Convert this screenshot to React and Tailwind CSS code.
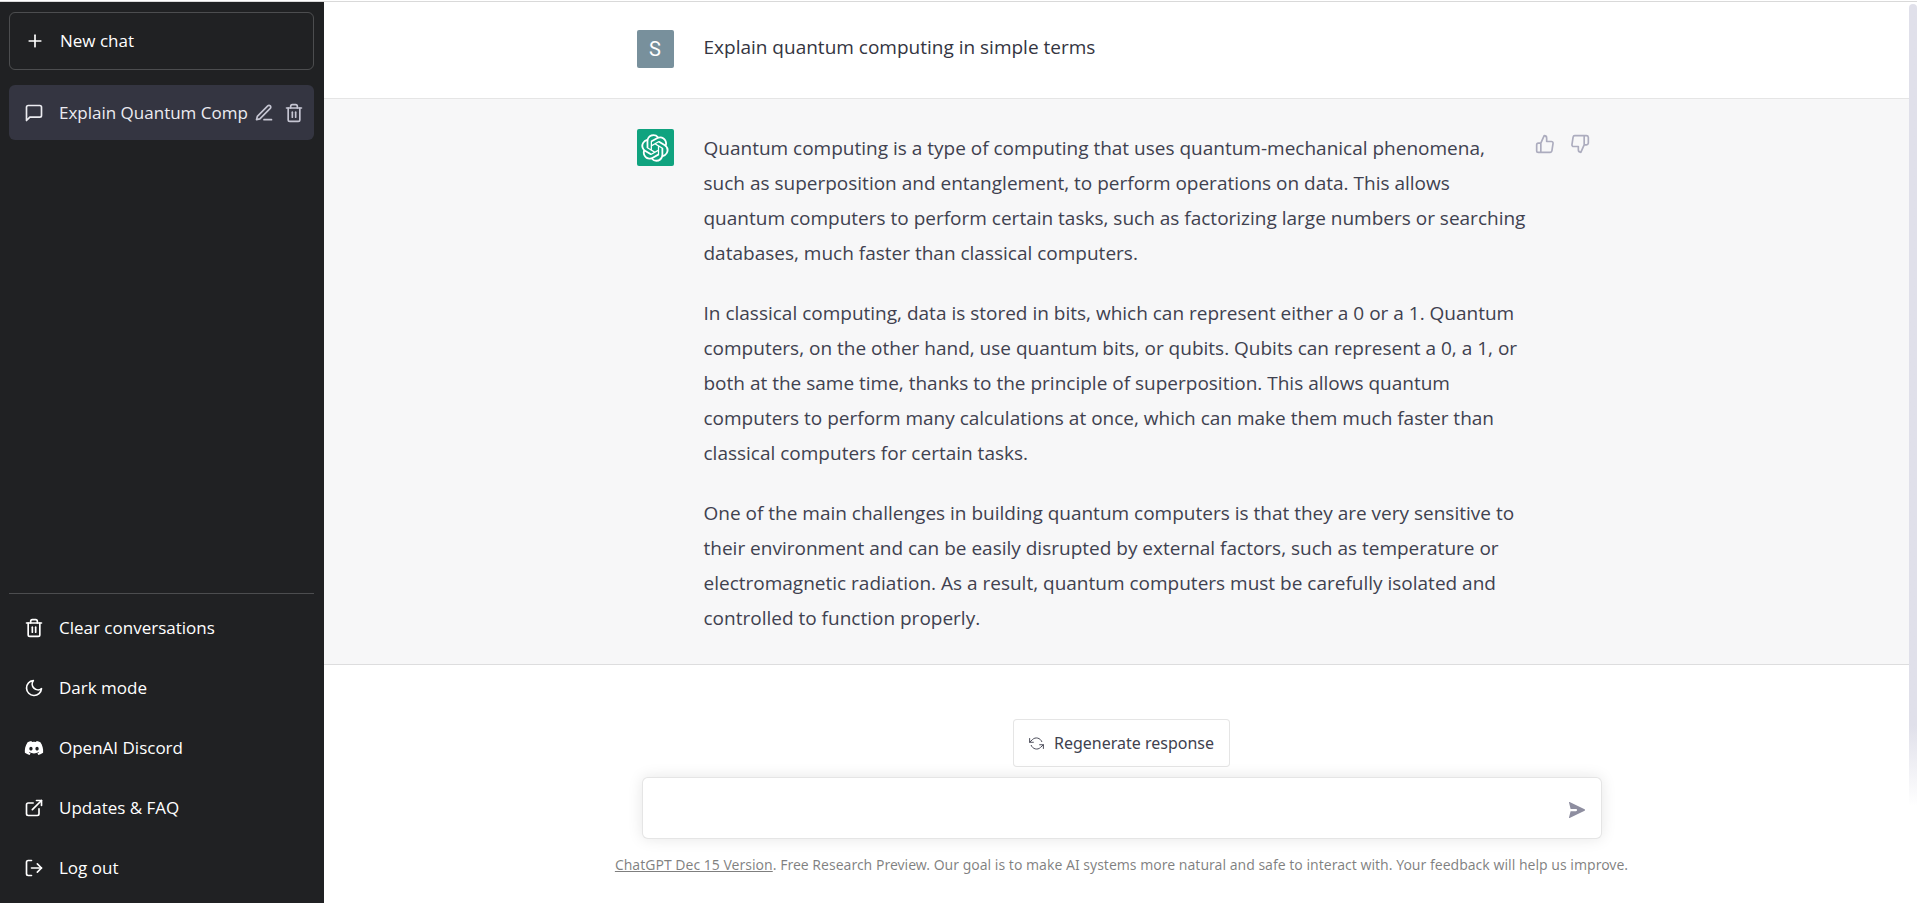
import { FiPlus, FiMessageSquare, FiTrash2, FiMoon, FiExternalLink, FiLogOut, FiThumbsUp, FiThumbsDown } from 'react-icons/fi';
import { FaDiscord } from 'react-icons/fa';

const PenIcon = ({ className }) => (
  <svg viewBox="0 0 24 24" className={className} fill="none" stroke="currentColor" strokeWidth="2" strokeLinecap="round" strokeLinejoin="round">
    <path d="M12 20h9" />
    <path d="M16.5 3.5a2.121 2.121 0 0 1 3 3L7 19l-4 1 1-4L16.5 3.5z" />
  </svg>
);

const RefreshIcon = ({ className }) => (
  <svg viewBox="0 0 24 24" className={className} fill="none" stroke="currentColor" strokeWidth="1.5" strokeLinecap="round" strokeLinejoin="round">
    <path d="M1 4v6h6" />
    <path d="M23 20v-6h-6" />
    <path d="M20.49 9A9 9 0 0 0 5.64 5.64L1 10m22 4l-4.64 4.36A9 9 0 0 1 3.51 15" />
  </svg>
);

const SendIcon = ({ className }) => (
  <svg viewBox="0 0 16 16" className={className} fill="currentColor">
    <path d="M.6 0 15.6 7.3a.8.8 0 0 1 0 1.4L.6 16a.4.4 0 0 1-.6-.4L1.6 9.2H7a1 1 0 0 0 0-2.2H1.6L0 .4A.4.4 0 0 1 .6 0Z" />
  </svg>
);

const OpenAILogo = ({ className }) => (
  <svg viewBox="0 0 41 41" className={className} fill="currentColor">
    <path d="M37.532 16.87a9.963 9.963 0 0 0-.856-8.184 10.078 10.078 0 0 0-10.855-4.835A9.964 9.964 0 0 0 18.306.5a10.079 10.079 0 0 0-9.614 6.977 9.967 9.967 0 0 0-6.664 4.834 10.08 10.08 0 0 0 1.24 11.817 9.965 9.965 0 0 0 .856 8.185 10.079 10.079 0 0 0 10.855 4.835 9.965 9.965 0 0 0 7.516 3.35 10.078 10.078 0 0 0 9.617-6.981 9.967 9.967 0 0 0 6.663-4.834 10.079 10.079 0 0 0-1.243-11.813ZM22.498 37.886a7.474 7.474 0 0 1-4.799-1.735c.061-.033.168-.091.237-.134l7.964-4.6a1.294 1.294 0 0 0 .655-1.134V19.054l3.366 1.944a.12.12 0 0 1 .066.092v9.299a7.505 7.505 0 0 1-7.49 7.496ZM6.392 31.006a7.471 7.471 0 0 1-.894-5.023c.06.036.162.099.237.141l7.964 4.6a1.297 1.297 0 0 0 1.308 0l9.724-5.614v3.888a.12.12 0 0 1-.048.103l-8.051 4.649a7.504 7.504 0 0 1-10.24-2.744ZM4.297 13.62A7.469 7.469 0 0 1 8.2 10.333c0 .068-.004.19-.004.274v9.201a1.294 1.294 0 0 0 .654 1.132l9.723 5.614-3.366 1.944a.12.12 0 0 1-.114.01L7.04 23.856a7.504 7.504 0 0 1-2.743-10.237Zm27.658 6.437-9.724-5.615 3.367-1.943a.121.121 0 0 1 .113-.01l8.052 4.648a7.498 7.498 0 0 1-1.158 13.528v-9.476a1.293 1.293 0 0 0-.65-1.132Zm3.35-5.043c-.059-.037-.162-.099-.236-.141l-7.965-4.6a1.298 1.298 0 0 0-1.308 0l-9.723 5.614v-3.888a.12.12 0 0 1 .048-.103l8.05-4.645a7.497 7.497 0 0 1 11.135 7.763Zm-21.063 6.929-3.367-1.944a.12.12 0 0 1-.065-.092v-9.299a7.497 7.497 0 0 1 12.293-5.756 6.94 6.94 0 0 0-.236.134l-7.965 4.6a1.294 1.294 0 0 0-.654 1.132l-.006 11.225Zm1.829-3.943 4.33-2.501 4.332 2.5v5l-4.331 2.5-4.331-2.5V18Z" />
  </svg>
);

const MENU = [
  { label: 'Clear conversations', icon: FiTrash2 },
  { label: 'Dark mode', icon: FiMoon },
  { label: 'OpenAI Discord', icon: FaDiscord, href: '#discord' },
  { label: 'Updates & FAQ', icon: FiExternalLink, href: '#faq' },
  { label: 'Log out', icon: FiLogOut },
];

const ANSWER = [
  'Quantum computing is a type of computing that uses quantum-mechanical phenomena, such as superposition and entanglement, to perform operations on data. This allows quantum computers to perform certain tasks, such as factorizing large numbers or searching databases, much faster than classical computers.',
  'In classical computing, data is stored in bits, which can represent either a 0 or a 1. Quantum computers, on the other hand, use quantum bits, or qubits. Qubits can represent a 0, a 1, or both at the same time, thanks to the principle of superposition. This allows quantum computers to perform many calculations at once, which can make them much faster than classical computers for certain tasks.',
  'One of the main challenges in building quantum computers is that they are very sensitive to their environment and can be easily disrupted by external factors, such as temperature or electromagnetic radiation. As a result, quantum computers must be carefully isolated and controlled to function properly.',
];

const MenuItem = ({ label, icon: Icon, href }) => {
  const cls = 'flex h-15 items-center gap-[15px] rounded-md px-[15px] text-left hover:bg-[#343541]';
  const content = <><Icon className="size-5 shrink-0" /><span>{label}</span></>;
  return href ? <a href={href} className={cls}>{content}</a> : <button type="button" className={cls}>{content}</button>;
};

const Sidebar = () => (
  <aside className="flex w-[324px] shrink-0 flex-col bg-[#202123] pt-[10px] pr-[10px] pb-[5px] pl-[9px] text-[17px] text-white">
    <button type="button" className="mb-[15px] flex h-[58px] items-center gap-[15px] rounded-md border border-white/20 px-[15px] text-left">
      <FiPlus className="size-5" />
      <span>New chat</span>
    </button>
    <div className="flex h-[55px] items-center gap-[15px] rounded-md bg-[#343541] pr-[10px] pl-[15px] text-[#ececf1]">
      <FiMessageSquare className="size-5 shrink-0" />
      <a href="#chat" className="min-w-0 flex-1 whitespace-nowrap">Explain Quantum Comp</a>
      <div className="flex gap-[10px] text-[#c5c5d2]">
        <button type="button" aria-label="Rename chat"><PenIcon className="size-5" /></button>
        <button type="button" aria-label="Delete chat"><FiTrash2 className="size-5" /></button>
      </div>
    </div>
    <nav className="mt-auto flex flex-col border-t border-white/20 pt-1">
      {MENU.map(item => <MenuItem key={item.label} {...item} />)}
    </nav>
  </aside>
);

const Message = ({ avatar, children, actions, className }) => (
  <div className={`border-b border-black/10 ${className}`}>
    <div className="mx-auto flex max-w-[960px] gap-[30px]">
      {avatar}
      <div className="min-w-0 flex-1">{children}</div>
      <div className="-ml-[30px] flex w-[67px] shrink-0 gap-[5px] text-[#acacbe]">{actions}</div>
    </div>
  </div>
);

const Conversation = () => (
  <div className="min-h-0 flex-1 pr-2 text-[19px]">
    <Message
      className="pt-7 pb-[30px] text-[#343541]"
      avatar={<div className="flex h-[38px] w-[37px] shrink-0 items-center justify-center rounded-xs bg-[#78909c] font-['Roboto'] text-xl text-white">S</div>}
    >
      <p className="leading-[35px]">Explain quantum computing in simple terms</p>
    </Message>
    <Message
      className="bg-[#f7f7f8] pt-[30px] pb-7 text-[#40414f]"
      avatar={<div className="flex size-[37px] shrink-0 items-center justify-center rounded-xs bg-[#10a37f] text-white"><OpenAILogo className="size-7" /></div>}
      actions={
        <>
          <button type="button" aria-label="Good response" className="h-[30px] p-[5px]"><FiThumbsUp className="size-5" /></button>
          <button type="button" aria-label="Bad response" className="h-[30px] p-[5px]"><FiThumbsDown className="size-5" /></button>
        </>
      }
    >
      <div className="flex flex-col gap-[25px] pt-[2px] leading-[35px]">
        {ANSWER.map((text, i) => <p key={i}>{text}</p>)}
      </div>
    </Message>
  </div>
);

const Composer = () => (
  <footer className="flex flex-col items-center pb-7 pl-[2px] font-['Noto_Sans',sans-serif]">
    <button type="button" className="mb-[10px] flex h-12 items-center gap-[10px] rounded-sm border border-black/10 bg-white px-[15px] text-base text-[#40414f]">
      <RefreshIcon className="size-[15px]" />
      Regenerate response
    </button>
    <form onSubmit={e => e.preventDefault()} className="flex h-[62px] w-full max-w-[960px] items-center rounded-md border border-black/10 bg-white pr-4 pl-5 shadow-[0_0_15px_rgba(0,0,0,0.1)]">
      <input type="text" aria-label="Message" className="h-full min-w-0 flex-1 text-xl outline-none" />
      <button type="submit" aria-label="Send" className="pt-1 text-[#8e8ea0]"><SendIcon className="size-4" /></button>
    </form>
    <p className="pt-4 text-center text-sm text-black/50">
      <a href="#release-notes" className="underline">ChatGPT Dec 15 Version</a>. Free Research Preview. Our goal is to make AI systems more natural and safe to interact with. Your feedback will help us improve.
    </p>
  </footer>
);

export default function App() {
  return (
    <div className="flex h-screen flex-col bg-white font-['Open_Sans',sans-serif]">
      <div className="h-[2px] shrink-0 border-b border-[#d9d9d9]" />
      <div className="flex min-h-0 flex-1">
        <Sidebar />
        <main className="relative flex min-w-0 flex-1 flex-col">
          <Conversation />
          <Composer />
          {/* scroll thumb, fades out behind the composer */}
          <div className="absolute top-[2px] right-0 h-[89%] w-2 rounded-t-full bg-linear-to-b from-[#e0e0ea] from-90% to-transparent" />
        </main>
      </div>
    </div>
  );
}
